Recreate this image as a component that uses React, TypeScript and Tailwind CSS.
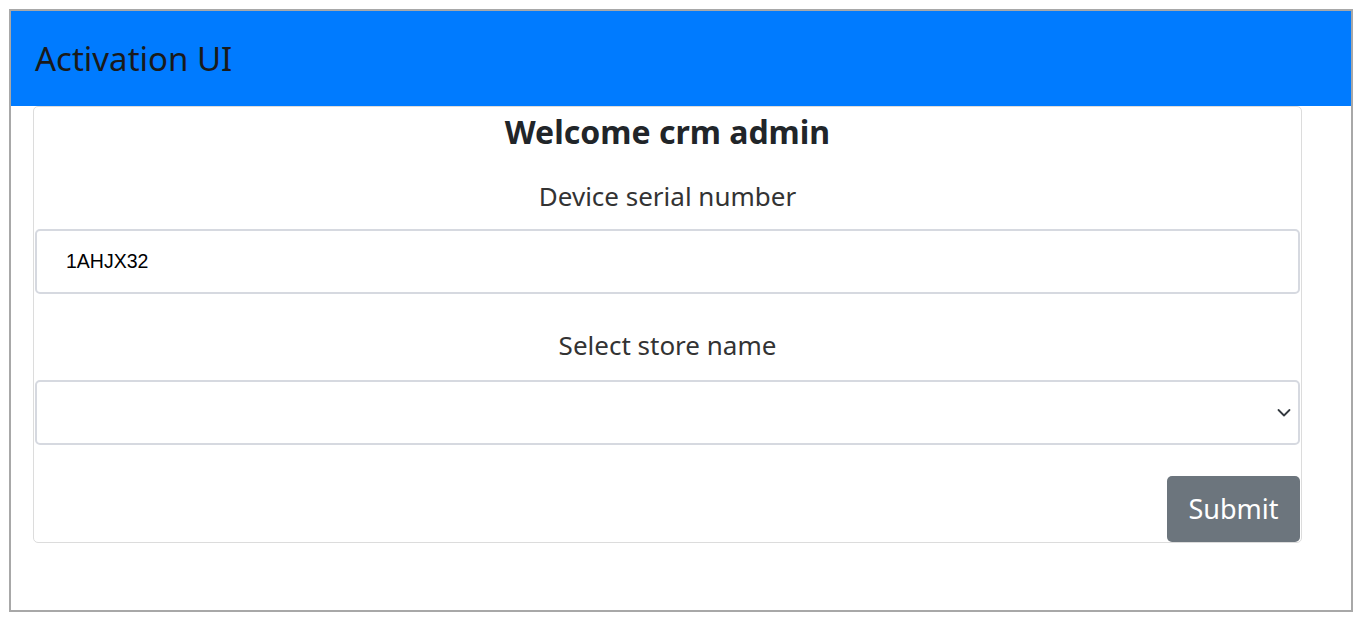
export default function App() {
  return (
    <div className="h-[619px] w-full bg-white pl-[9px] pt-[9px]" style={{ fontFamily: '"Noto Sans", sans-serif' }}>
      <div className="h-[603px] w-[1344px] border-2 border-[#a8a8a8] bg-white">
        <header className="flex h-[95px] items-center bg-[#007bff] pl-[24px]">
          <h1 className="text-[33px] font-normal text-[#1a1a1a]">Activation UI</h1>
        </header>
        <div className="ml-[22px] flex h-[437px] w-[1269px] flex-col rounded-[5px] border border-[#dcdcdc] px-px pt-px">
          <h2 className="mt-[4px] text-center text-[32px] font-bold leading-[40px] text-[#212529]">Welcome crm admin</h2>
          <label className="mt-[27px] text-center text-[26px] leading-[34px] text-[#333333]">Device serial number</label>
          <input
            className="mt-[16px] h-[65px] w-full rounded-[5px] border-2 border-[#d6d9e0] px-[29px] text-[19.5px] text-black outline-none"
            style={{ fontFamily: '"Liberation Sans", sans-serif' }}
            defaultValue="1AHJX32"
          />
          <label className="mt-[34px] text-center text-[26px] leading-[34px] text-[#333333]">Select store name</label>
          <div className="relative mt-[18px] h-[65px] w-full rounded-[5px] border-2 border-[#d6d9e0]">
            <svg className="absolute right-[6px] top-[26px]" width="16" height="10" viewBox="0 0 16 10" fill="none">
              <path d="M2.5 2 8 7.5 13.5 2" stroke="#343a40" strokeWidth="1.8" strokeLinecap="round" strokeLinejoin="round" />
            </svg>
          </div>
          <div className="mt-auto flex justify-end">
            <button className="h-[66px] w-[133px] rounded-[5px] bg-[#6c757d] text-[27px] text-white">Submit</button>
          </div>
        </div>
      </div>
    </div>
  );
}
